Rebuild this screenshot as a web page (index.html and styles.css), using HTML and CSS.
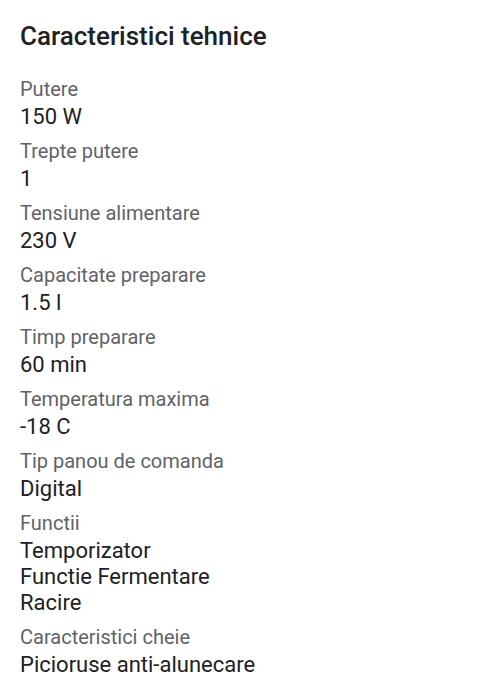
FILE: index.html
```html
<!DOCTYPE html>
<html lang="ro">

<head>
  <meta charset="UTF-8">
  <meta name="viewport" content="width=device-width, initial-scale=1.0">
  <title>Caracteristici tehnice</title>
  <link rel="stylesheet" href="styles.css">
</head>

<body>
  <section class="specs">
    <h2 class="specs-title">Caracteristici tehnice</h2>
    <div class="spec">
      <div class="spec-label">Putere</div>
      <div class="spec-value">150 W</div>
    </div>
    <div class="spec">
      <div class="spec-label">Trepte putere</div>
      <div class="spec-value">1</div>
    </div>
    <div class="spec">
      <div class="spec-label">Tensiune alimentare</div>
      <div class="spec-value">230 V</div>
    </div>
    <div class="spec">
      <div class="spec-label">Capacitate preparare</div>
      <div class="spec-value">1.5 l</div>
    </div>
    <div class="spec">
      <div class="spec-label">Timp preparare</div>
      <div class="spec-value">60 min</div>
    </div>
    <div class="spec">
      <div class="spec-label">Temperatura maxima</div>
      <div class="spec-value">-18 C</div>
    </div>
    <div class="spec">
      <div class="spec-label">Tip panou de comanda</div>
      <div class="spec-value">Digital</div>
    </div>
    <div class="spec">
      <div class="spec-label">Functii</div>
      <div class="spec-value">Temporizator</div>
      <div class="spec-value">Functie Fermentare</div>
      <div class="spec-value">Racire</div>
    </div>
    <div class="spec">
      <div class="spec-label">Caracteristici cheie</div>
      <div class="spec-value">Picioruse anti-alunecare</div>
    </div>
  </section>
</body>

</html>
```

FILE: styles.css
```css
body {
  margin: 0;
  padding: 0;
  background: #ffffff;
  font-family: Roboto, "Noto Sans", sans-serif;
  color: #202124;
}

.specs {
  display: flex;
  flex-direction: column;
  gap: 8px;
  padding: 20px 20px;
}

.specs-title {
  margin: 0 0 16px 0;
  font-size: 26px;
  line-height: 32px;
  font-weight: 500;
  color: #202124;
}

.spec {
  display: flex;
  flex-direction: column;
  gap: 2px;
}

.spec-label {
  font-size: 20px;
  line-height: 26px;
  color: #5f6368;
}

.spec-value {
  font-size: 22px;
  line-height: 26px;
  color: #202124;
}

.spec-value + .spec-value {
  margin-top: -2px;
}
```
